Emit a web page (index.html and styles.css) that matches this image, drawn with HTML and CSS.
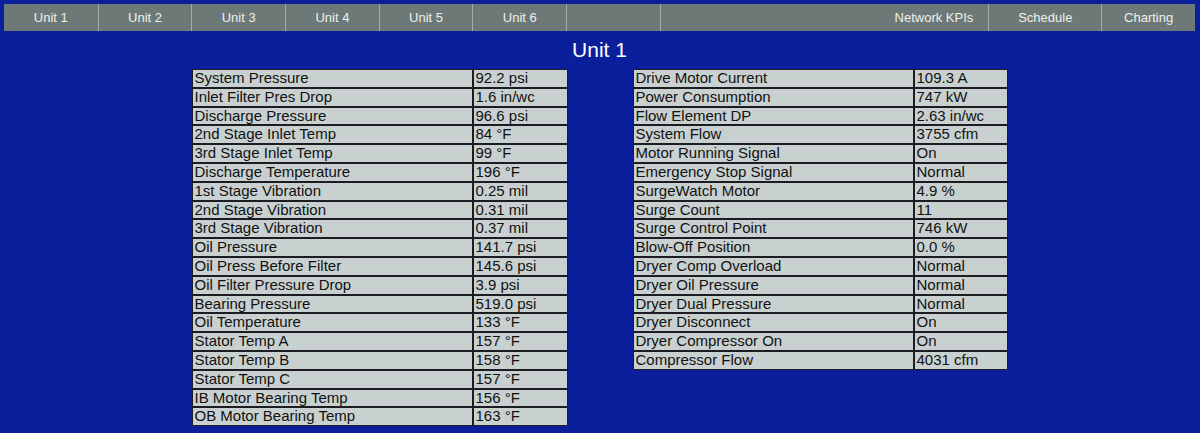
FILE: index.html
```html
<!DOCTYPE html>
<html lang="en">
<head>
<meta charset="UTF-8">
<meta name="viewport" content="width=device-width, initial-scale=1.0">
<title>Unit 1</title>
<link rel="stylesheet" href="styles.css">
</head>
<body>

<div class="nav">
    <a class="nav-item">Unit 1</a>
    <a class="nav-item">Unit 2</a>
    <a class="nav-item">Unit 3</a>
    <a class="nav-item">Unit 4</a>
    <a class="nav-item">Unit 5</a>
    <a class="nav-item">Unit 6</a>
    <a class="nav-item"></a>
    <a class="nav-item wide">Network KPIs</a>
    <a class="nav-item sched">Schedule</a>
    <a class="nav-item">Charting</a>
</div>

<h2 class="title">Unit 1</h2>

<div class="tables">
    <table class="data">
        <tr><td>System Pressure</td><td>92.2 psi</td></tr>
        <tr><td>Inlet Filter Pres Drop</td><td>1.6 in/wc</td></tr>
        <tr><td>Discharge Pressure</td><td>96.6 psi</td></tr>
        <tr><td>2nd Stage Inlet Temp</td><td>84 °F</td></tr>
        <tr><td>3rd Stage Inlet Temp</td><td>99 °F</td></tr>
        <tr><td>Discharge Temperature</td><td>196 °F</td></tr>
        <tr><td>1st Stage Vibration</td><td>0.25 mil</td></tr>
        <tr><td>2nd Stage Vibration</td><td>0.31 mil</td></tr>
        <tr><td>3rd Stage Vibration</td><td>0.37 mil</td></tr>
        <tr><td>Oil Pressure</td><td>141.7 psi</td></tr>
        <tr><td>Oil Press Before Filter</td><td>145.6 psi</td></tr>
        <tr><td>Oil Filter Pressure Drop</td><td>3.9 psi</td></tr>
        <tr><td>Bearing Pressure</td><td>519.0 psi</td></tr>
        <tr><td>Oil Temperature</td><td>133 °F</td></tr>
        <tr><td>Stator Temp A</td><td>157 °F</td></tr>
        <tr><td>Stator Temp B</td><td>158 °F</td></tr>
        <tr><td>Stator Temp C</td><td>157 °F</td></tr>
        <tr><td>IB Motor Bearing Temp</td><td>156 °F</td></tr>
        <tr><td>OB Motor Bearing Temp</td><td>163 °F</td></tr>
    </table>

    <table class="data right">
        <tr><td>Drive Motor Current</td><td>109.3 A</td></tr>
        <tr><td>Power Consumption</td><td>747 kW</td></tr>
        <tr><td>Flow Element DP</td><td>2.63 in/wc</td></tr>
        <tr><td>System Flow</td><td>3755 cfm</td></tr>
        <tr><td>Motor Running Signal</td><td>On</td></tr>
        <tr><td>Emergency Stop Signal</td><td>Normal</td></tr>
        <tr><td>SurgeWatch Motor</td><td>4.9 %</td></tr>
        <tr><td>Surge Count</td><td>11</td></tr>
        <tr><td>Surge Control Point</td><td>746 kW</td></tr>
        <tr><td>Blow-Off Position</td><td>0.0 %</td></tr>
        <tr><td>Dryer Comp Overload</td><td>Normal</td></tr>
        <tr><td>Dryer Oil Pressure</td><td>Normal</td></tr>
        <tr><td>Dryer Dual Pressure</td><td>Normal</td></tr>
        <tr><td>Dryer Disconnect</td><td>On</td></tr>
        <tr><td>Dryer Compressor On</td><td>On</td></tr>
        <tr><td>Compressor Flow</td><td>4031 cfm</td></tr>
    </table>
</div>

</body>
</html>
```

FILE: styles.css
```css
body {
    font-family: "Liberation Sans", Arial, sans-serif;
    background-color: #0b1f9c;
    margin: 0;
    padding: 4px 5px 4px 4px;
}
.nav {
    display: flex;
    height: 27px;
    background-color: #6d7977;
}
.nav-item {
    box-sizing: border-box;
    width: 93.7px;
    flex-shrink: 0;
    line-height: 27px;
    text-align: center;
    font-size: 13px;
    color: #eef0ec;
    border-left: 1px solid #a3abaa;
    cursor: pointer;
}
.nav-item:first-child {
    border-left: none;
}
.nav-item.wide {
    flex: 1;
    text-align: right;
    padding-right: 15px;
}
.nav-item.sched {
    width: 113px;
}
.title {
    margin: 0;
    height: 38px;
    line-height: 38px;
    text-align: center;
    font-size: 21px;
    font-weight: normal;
    color: #fff;
}
.tables {
    display: flex;
    justify-content: center;
    align-items: flex-start;
    gap: 65px;
}
.data {
    border-collapse: separate;
    border-spacing: 0;
    font-size: 15px;
    color: #111;
}
.data td {
    background-color: #c9d1d0;
    border: 1px solid #1b1d22;
    padding: 0 2px;
    line-height: 16.8px;
    white-space: nowrap;
}
.data td:first-child {
    width: 275px;
}
.data td:last-child {
    width: 89px;
}
.data.right td:last-child {
    width: 88px;
}
```
